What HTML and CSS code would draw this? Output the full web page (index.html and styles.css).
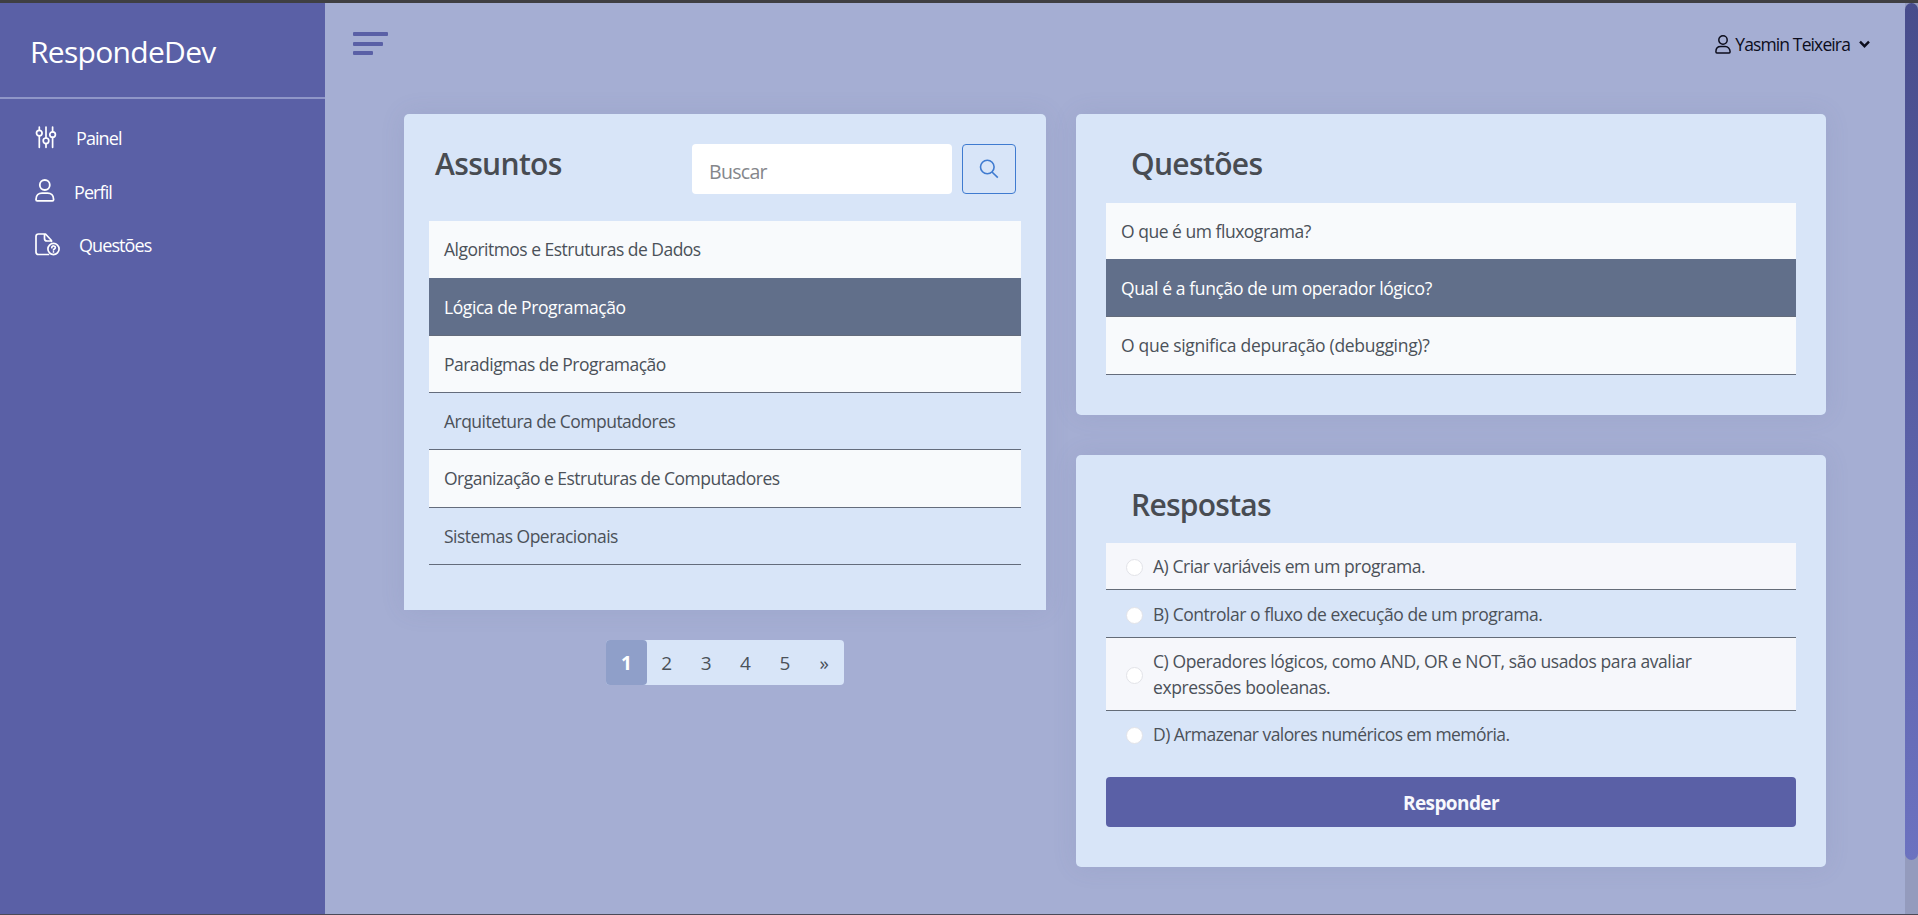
FILE: index.html
```html
<!DOCTYPE html>
<html lang="pt-BR">
<head>
<meta charset="utf-8">
<title>RespondeDev</title>
<link rel="stylesheet" href="styles.css">
</head>
<body>
<div class="app">
  <aside class="sidebar">
    <div class="brand">RespondeDev</div>
    <nav class="menu">
      <a class="item"><svg width="22" height="23" viewBox="0 0 22 23"><g fill="none" stroke="currentColor" stroke-width="1.700" stroke-linecap="round"><path d="M4.300 1v3M4.300 10v11.300M11 1v10.800M11 17.600v3.700M17.600 1v4.600M17.600 11.300v10"/><circle cx="4.300" cy="7.100" r="2.800"/><circle cx="11" cy="14.800" r="2.800"/><circle cx="17.600" cy="8.600" r="2.800"/></g></svg><span class="painel">Painel</span></a>
      <a class="item"><svg width="20" height="23" viewBox="0 0 20 23"><g fill="none" stroke="currentColor" stroke-width="1.800"><circle cx="9.800" cy="6" r="5"/><path d="M2.200 21.800h15.200q1.200 0 1.200-1.400c0-4-2.700-6.300-6-6.300h-5.600c-3.300 0-6 2.300-6 6.300q0 1.400 1.200 1.400z"/></g></svg><span class="perfil">Perfil</span></a>
      <a class="item"><svg width="26" height="23" viewBox="0 0 26 23"><g fill="none" stroke="currentColor" stroke-width="1.700" stroke-linecap="round" stroke-linejoin="round"><path d="M13.500 21.500H3.500Q1 21.500 1 19V3.500Q1 1 3.500 1H10.500L16.500 7.500V8.500M9.500 1.200V5.500Q9.500 8 12 8H16.300"/><circle cx="18.500" cy="16" r="5.600"/><path d="M16.800 14.700c0-2.400 3.600-2.200 3.500 0 0 1.300-1.700 1.200-1.800 2.300M18.500 18.900v.1"/></g></svg><span class="questoes">Questões</span></a>
    </nav>
  </aside>
  <div class="page">
    <header class="topbar">
      <div class="burger"><i></i><i></i><i></i></div>
      <div class="user">
        <svg width="16" height="19" viewBox="0 0 16 19"><g fill="none" stroke="currentColor" stroke-width="1.500"><circle cx="8" cy="5" r="4.200"/><path d="M1.900 17.900h12.200q1 0 1-1.100c0-3.300-2.200-5.200-4.900-5.200H5.800C3.100 11.600.9 13.500.9 16.800q0 1.100 1 1.100z"/></g></svg>
        <span class="username">Yasmin Teixeira</span>
        <svg class="caret" width="11" height="9" viewBox="0 0 11 9"><path d="M1 1.700l4.500 4.500L10 1.700" fill="none" stroke="currentColor" stroke-width="2.400"/></svg>
      </div>
    </header>
    <main class="content">
      <section class="left">
        <div class="card subjects">
          <div class="subjects-head">
            <h2>Assuntos</h2>
            <div class="search">
              <input class="field" type="text" placeholder="Buscar">
              <button class="go"><svg width="20" height="20" viewBox="0 0 20 20"><g fill="none" stroke="currentColor" stroke-width="1.600"><circle cx="8.300" cy="8" r="6.800"/><path d="M13 13l5.800 5.600"/></g></svg></button>
            </div>
          </div>
          <ul class="rows">
            <li class="light">Algoritmos e Estruturas de Dados</li>
            <li class="active tall">Lógica de Programação</li>
            <li class="light">Paradigmas de Programação</li>
            <li>Arquitetura de Computadores</li>
            <li class="light tall">Organização e Estruturas de Computadores</li>
            <li>Sistemas Operacionais</li>
          </ul>
        </div>
        <div class="pager"><b>1</b><span>2</span><span>3</span><span>4</span><span>5</span><span>»</span></div>
      </section>
      <section class="right">
        <div class="card questions">
          <h2>Questões</h2>
          <ul class="rows">
            <li class="light short">O que é um fluxograma?</li>
            <li class="active tall">Qual é a função de um operador lógico?</li>
            <li class="light tall">O que significa depuração (debugging)?</li>
          </ul>
        </div>
        <div class="card answers">
          <h2>Respostas</h2>
          <div class="options">
            <label class="option shade"><i class="radio"></i><span>A) Criar variáveis em um programa.</span></label>
            <label class="option"><i class="radio"></i><span>B) Controlar o fluxo de execução de um programa.</span></label>
            <label class="option shade double"><i class="radio"></i><span>C) Operadores lógicos, como AND, OR e NOT, são usados para avaliar expressões booleanas.</span></label>
            <label class="option last"><i class="radio"></i><span>D) Armazenar valores numéricos em memória.</span></label>
          </div>
          <button class="submit">Responder</button>
        </div>
      </section>
    </main>
  </div>
  <div class="scrollbar"><div class="thumb"></div></div>
</div>
</body>
</html>
```
FILE: styles.css
```css
* { box-sizing: border-box; }
body {
  margin: 0;
  height: 915px;
  overflow: hidden;
  border-top: 3px solid #3f3f42;
  border-bottom: 1px solid #4a4a58;
  background: #a5aed3;
  font-family: "Open Sans", "Noto Sans", sans-serif;
  font-size: 17.5px;
  font-weight: 370;
  color: #4b5159;
}
.app { display: flex; height: 911px; }
.sidebar { width: 325px; background: #5a60a6; color: #fff; font-weight: 400; }
.brand {
  height: 96px;
  padding: 27px 0 0 30px;
  border-bottom: 2px solid #8f96c8;
  font-size: 30px;
  line-height: 44px;
  letter-spacing: -0.7px;
}
.menu { display: flex; flex-direction: column; padding: 12px 0 0 35px; }
.item {
  display: flex;
  align-items: center;
  height: 53.5px;
  font-size: 18px;
  letter-spacing: -0.92px;
}
.item svg { margin-top: -1px; }
.item span { padding-top: 1px; }
.painel { padding-left: 19px; }
.perfil { padding-left: 19px; }
.questoes { padding-left: 18px; }

.page { flex: 1; }
.topbar {
  display: flex;
  justify-content: space-between;
  height: 111px;
  padding: 29px 35px 0 28px;
}
.burger i {
  display: block;
  width: 35px;
  height: 4px;
  border-radius: 1px;
  margin-bottom: 6px;
  background: #5a60a6;
}
.burger i:nth-child(2) { width: 30px; margin-bottom: 5px; }
.burger i:nth-child(3) { width: 20px; }
.user { display: flex; align-items: center; height: 24px; color: #0c0d1c; }
.username { padding-left: 4px; font-size: 17.5px; letter-spacing: -0.88px; }
.caret { margin-left: 9px; }

.content { display: flex; gap: 30px; padding-left: 79px; }
.left { width: 642px; }
.right { width: 750px; }
.card {
  border-radius: 5px;
  background: #d8e5f8;
  box-shadow: 0 0 26px rgba(90, 96, 150, 0.11);
}
h2 {
  margin: 0;
  font-size: 30px;
  line-height: 44px;
  font-weight: 600;
  letter-spacing: -0.65px;
  color: #484c52;
}
.subjects { height: 496px; padding: 30px 25px 0; border-radius: 5px 5px 0 0; }
.subjects-head { display: flex; justify-content: space-between; height: 77px; padding: 0 5px 0 6px; }
.subjects-head h2 { line-height: 40px; }
.search { display: flex; gap: 10px; height: 50px; }
.field {
  width: 260px;
  padding: 4px 17px 0;
  border: 0;
  border-radius: 4px;
  background: #fff;
  font: 19.5px "Open Sans", "Noto Sans", sans-serif;
  letter-spacing: -0.7px;
}
.field::placeholder { color: #85878b; }
.go {
  display: flex;
  align-items: center;
  justify-content: center;
  width: 54px;
  padding: 0;
  border: 1px solid #3f7bd0;
  border-radius: 4px;
  background: none;
  color: #3f7bd0;
}
.rows { margin: 0; padding: 0; list-style: none; }
.rows li {
  height: 57px;
  padding: 0 15px;
  border-bottom: 1px solid #646c7c;
  line-height: 57px;
  letter-spacing: -0.52px;
}
.rows .light { background: #f8fafc; }
.rows .tall { height: 58px; line-height: 57px; }
.rows .short { height: 56px; }
.rows .light:first-child { border-bottom: 0; }
.rows .active { background: #616f8a; color: #fff; font-weight: 500; line-height: 59px; letter-spacing: -0.42px; }
.pager {
  display: flex;
  width: 238px;
  height: 45px;
  margin: 30px 0 0 202px;
  border-radius: 4px;
  background: #d8e5f8;
  font-size: 19px;
  line-height: 46px;
  text-align: center;
}
.pager b { width: 41px; border-radius: 4px; background: #8f9fc9; color: #fff; }
.pager span { width: 39.4px; }

.questions { height: 301px; padding: 29px 30px 0; }
.questions h2, .answers h2 { padding-left: 25px; line-height: 42px; }
.questions h2 { height: 60px; }
.questions .rows li { letter-spacing: -0.3px; }
.questions .rows .short { letter-spacing: -0.48px; }
.questions .rows .active { letter-spacing: -0.37px; }
.answers { height: 412px; margin-top: 40px; padding: 29px 30px 0; }
.answers h2 { height: 59px; letter-spacing: -0.75px; }
.option {
  display: flex;
  align-items: center;
  height: 48px;
  padding: 0 80px 0 20px;
  border-bottom: 1px solid #646c78;
  line-height: 26px;
  letter-spacing: -0.46px;
}
.option:first-child { height: 47px; }
.option.double { height: 73px; letter-spacing: -0.4px; }
.option.last { height: 48px; padding-bottom: 2px; border: 0; letter-spacing: -0.56px; }
.shade { background: #f6f7fb; }
.radio {
  flex: none;
  width: 17px;
  height: 17px;
  margin: 3px 10px 0 0;
  border: 1px solid #e2e3e8;
  border-radius: 50%;
  background: #fff;
}
.submit {
  display: block;
  width: 690px;
  height: 50px;
  margin-top: 18px;
  padding: 2px 0 0;
  border: 0;
  border-radius: 4px;
  background: #5a60a6;
  color: #f7f8fd;
  font: 700 19px "Open Sans", "Noto Sans", sans-serif;
  letter-spacing: -0.6px;
}
.scrollbar { width: 13px; background: #949bbd; }
.thumb {
  height: 857px;
  border-radius: 7px;
  background: linear-gradient(#474c8b, #5a60a6 50%, #6c72c0);
}
```
